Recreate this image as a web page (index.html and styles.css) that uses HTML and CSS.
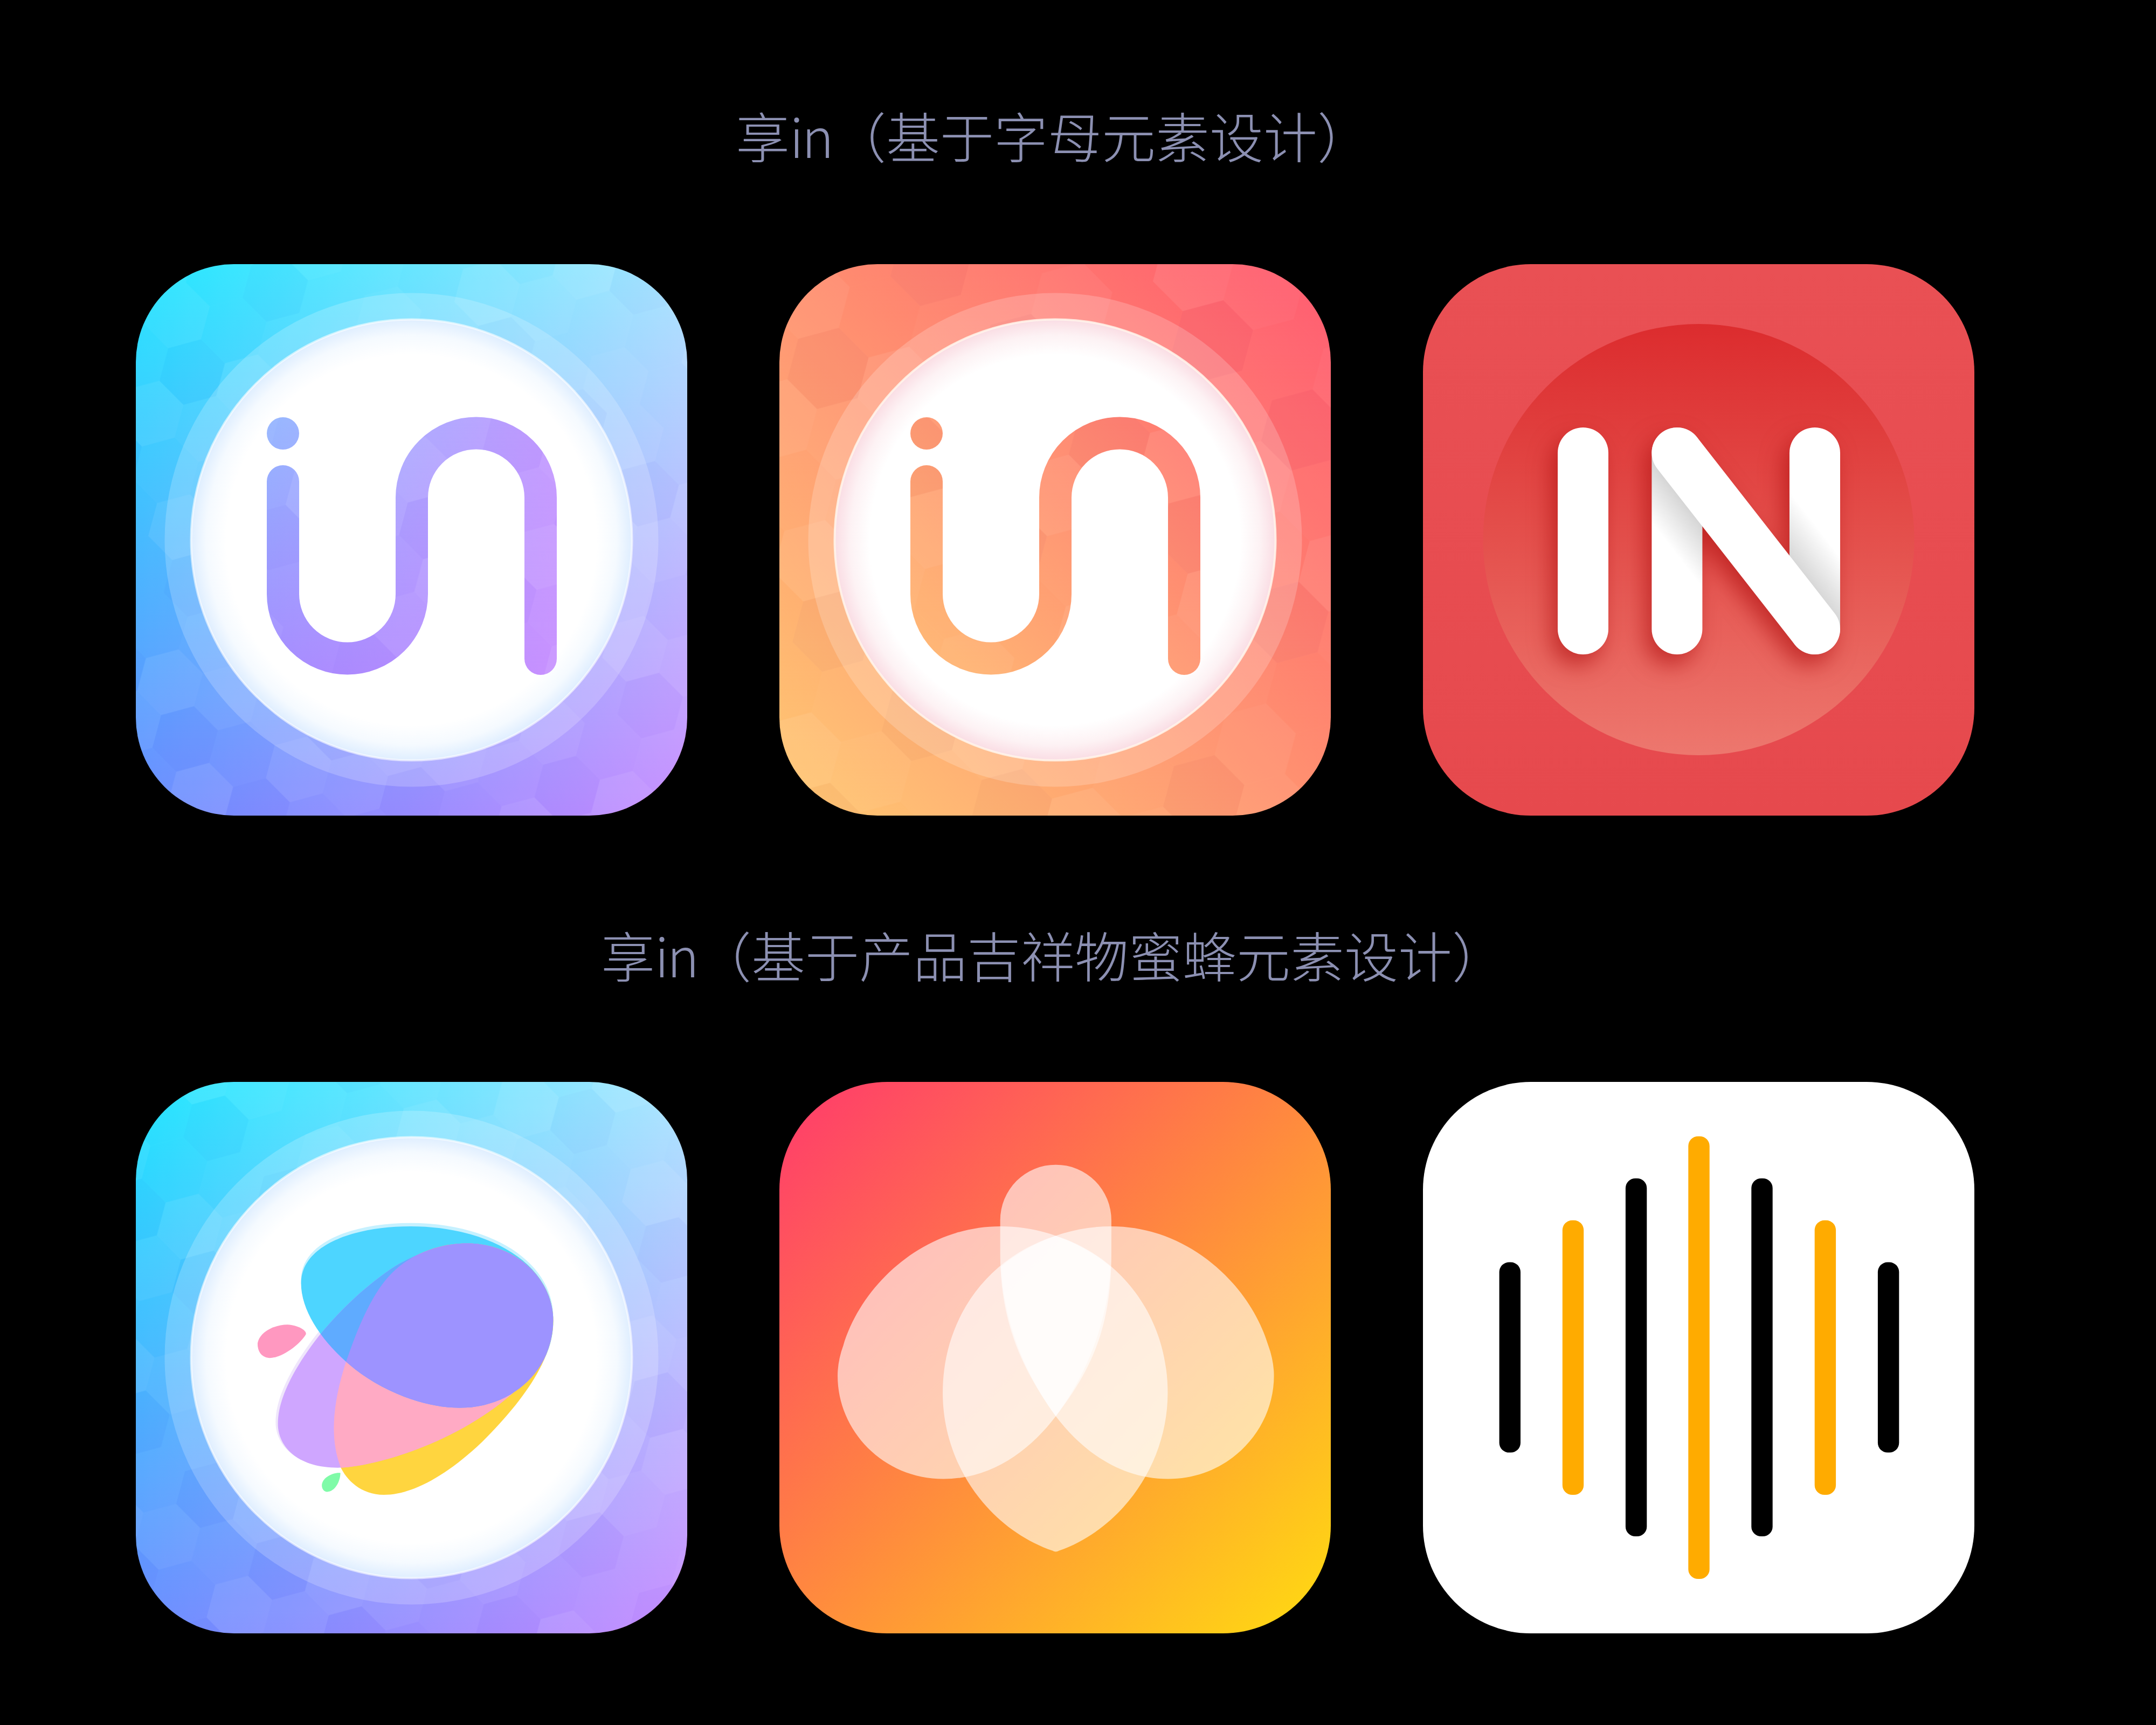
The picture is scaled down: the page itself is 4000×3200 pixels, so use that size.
FILE: index.html
```html
<!DOCTYPE html>
<html lang="zh">
<head>
<meta charset="utf-8">
<title>享in</title>
<link rel="stylesheet" href="styles.css">
</head>
<body>
<svg class="defs" width="0" height="0" aria-hidden="true">
  <defs>
    <path id="hx" d="M0-63 54.5-31.5V31.5L0 63-54.5 31.5V-31.5Z"/>
    <pattern id="hexA" width="436" height="566.4" patternUnits="userSpaceOnUse" patternTransform="translate(40 20) rotate(15)">
      <use href="#hx" x="54.5" y="63" class="ha"/><use href="#hx" x="163.5" y="63" class="hc"/><use href="#hx" x="272.5" y="63" class="hb"/><use href="#hx" x="381.5" y="63" class="hd"/>
      <use href="#hx" x="0" y="157.4" class="hb"/><use href="#hx" x="109" y="157.4" class="hd"/><use href="#hx" x="218" y="157.4" class="he"/><use href="#hx" x="327" y="157.4" class="ha"/><use href="#hx" x="436" y="157.4" class="hb"/>
      <use href="#hx" x="54.5" y="251.8" class="he"/><use href="#hx" x="163.5" y="251.8" class="ha"/><use href="#hx" x="272.5" y="251.8" class="hd"/><use href="#hx" x="381.5" y="251.8" class="hc"/>
      <use href="#hx" x="0" y="346.2" class="hd"/><use href="#hx" x="109" y="346.2" class="hb"/><use href="#hx" x="218" y="346.2" class="hc"/><use href="#hx" x="327" y="346.2" class="he"/><use href="#hx" x="436" y="346.2" class="hd"/>
      <use href="#hx" x="54.5" y="440.6" class="hc"/><use href="#hx" x="163.5" y="440.6" class="he"/><use href="#hx" x="272.5" y="440.6" class="ha"/><use href="#hx" x="381.5" y="440.6" class="hb"/>
      <use href="#hx" x="0" y="535" class="ha"/><use href="#hx" x="109" y="535" class="hc"/><use href="#hx" x="218" y="535" class="hd"/><use href="#hx" x="327" y="535" class="hb"/><use href="#hx" x="436" y="535" class="ha"/>
      <use href="#hx" x="0" y="-31.4" class="ha"/><use href="#hx" x="109" y="-31.4" class="hc"/><use href="#hx" x="218" y="-31.4" class="hd"/><use href="#hx" x="327" y="-31.4" class="hb"/><use href="#hx" x="436" y="-31.4" class="ha"/>
    </pattern>
    <pattern id="hexB" href="#hexA" patternTransform="translate(10 -30) rotate(15) scale(1.24)"/>
    <pattern id="hexC" href="#hexA" patternTransform="translate(-70 60) rotate(15)"/>
    <linearGradient id="cyanV" x1="0" y1="0" x2="0" y2="1"><stop offset="0" stop-color="#1fe6ff"/><stop offset="1" stop-color="#6a8cff"/></linearGradient>
    <linearGradient id="redH" x1="0" y1="0" x2="1" y2="0"><stop offset="0" stop-color="#000"/><stop offset="1" stop-color="#a00000"/></linearGradient>
    <linearGradient id="sunset" x1="1" y1="0" x2="0" y2="1"><stop offset="0" stop-color="#ff566c"/><stop offset="1" stop-color="#ffc870"/></linearGradient>
    <linearGradient id="inV" gradientUnits="userSpaceOnUse" x1="0" y1="285" x2="0" y2="762"><stop offset="0" stop-color="#94b6ff"/><stop offset="1" stop-color="#a48aff"/></linearGradient>
    <linearGradient id="inH" gradientUnits="userSpaceOnUse" x1="243" y1="0" x2="781" y2="0"><stop offset="0" stop-color="#d292ff" stop-opacity="0"/><stop offset="1" stop-color="#d292ff" stop-opacity=".75"/></linearGradient>
    <linearGradient id="inOrange" gradientUnits="userSpaceOnUse" x1="751" y1="285" x2="273" y2="762"><stop offset="0" stop-color="#ff786e"/><stop offset="1" stop-color="#ffb872"/></linearGradient>
    <radialGradient id="discBlue"><stop offset=".84" stop-color="#fff"/><stop offset=".93" stop-color="#f5faff"/><stop offset="1" stop-color="#dfeeff"/></radialGradient>
    <radialGradient id="discPink"><stop offset=".84" stop-color="#fff"/><stop offset=".93" stop-color="#fdf2f4"/><stop offset="1" stop-color="#fadde4"/></radialGradient>
    <mask id="inMask" maskUnits="userSpaceOnUse" x="0" y="0" width="1023" height="1023">
      <circle cx="273" cy="314" r="30" class="maskFill"/>
      <path d="M273 403V612A119.5 119.5 0 0 0 512 612V433A119.5 119.5 0 0 1 751 433V732" class="maskStroke"/>
    </mask>
    <linearGradient id="redBg" x1="0" y1="0" x2="0" y2="1"><stop offset="0" stop-color="#e95054"/><stop offset="1" stop-color="#e6494d"/></linearGradient>
    <linearGradient id="redDisc" x1="0" y1="0" x2="0" y2="1"><stop offset="0" stop-color="#dc2c2e"/><stop offset=".5" stop-color="#e4504c"/><stop offset="1" stop-color="#ed776e"/></linearGradient>
    <linearGradient id="foldL" gradientUnits="userSpaceOnUse" x1="434" y1="379" x2="379" y2="422"><stop offset="0" stop-color="#d6d6d6"/><stop offset="1" stop-color="#fff"/></linearGradient>
    <linearGradient id="foldR" gradientUnits="userSpaceOnUse" x1="764" y1="648" x2="821" y2="604"><stop offset="0" stop-color="#d8d8d8"/><stop offset="1" stop-color="#fff"/></linearGradient>
    <linearGradient id="flame" x1="0" y1="0" x2="1" y2="1"><stop offset="0" stop-color="#ff3a6c"/><stop offset=".5" stop-color="#ff8a3e"/><stop offset="1" stop-color="#ffdc10"/></linearGradient>
    <path id="blobB" d="M481 570C481 470 620 420 770 420 980 420 1148 520 1148 670 1148 800 1040 900 900 900 800 900 680 850 600 778 530 715 481 640 481 570Z"/>
    <path id="blobY" d="M600 778C640 660 680 580 730 535 780 490 850 465 920 465 1050 465 1148 560 1148 670 1148 770 1070 880 960 990 860 1085 770 1130 700 1130 640 1130 600 1090 585 1055 560 990 560 900 600 778Z"/>
    <path id="blobP" d="M532 705C590 635 660 570 730 525 790 490 860 465 920 465 1040 465 1148 560 1148 670 1140 740 1090 810 1040 862 900 985 700 1050 590 1058 480 1062 425 1010 420 950 415 870 480 770 532 705Z"/>
    <clipPath id="clipB"><use href="#blobB"/></clipPath>
    <clipPath id="clipP"><use href="#blobP"/></clipPath>
    <path id="wing" d="M912 527C870 490 815 462 767 445 720 428 670 420 620 420 420 420 255 570 205 735 195 762 190 790 190 815 190 960 310 1088 470 1088 600 1088 700 1010 767 922 850 810 905 670 912 527Z"/>
  </defs>
</svg>

<main class="page">
  <section class="group first">
    <h2 class="title">享<span class="latin">in</span>（基于字母元素设计）</h2>
    <div class="row">
      <div class="tile soft">
        <svg viewBox="0 0 1023 1023" class="art">
          <rect width="1023" height="1023" fill="url(#cyanV)"/>
          <rect width="1023" height="1023" fill="url(#redH)" class="screen"/>
          <rect width="1023" height="1023" fill="url(#hexA)"/>
          <circle cx="511.5" cy="511.5" r="458" class="ring"/>
          <circle cx="511.5" cy="511.5" r="409" fill="url(#discBlue)" class="disc"/>
          <g mask="url(#inMask)">
            <rect width="1023" height="1023" fill="url(#inV)"/>
            <rect width="1023" height="1023" fill="url(#inH)"/>
            <rect width="1023" height="1023" fill="url(#hexC)"/>
          </g>
        </svg>
      </div>
      <div class="tile soft">
        <svg viewBox="0 0 1023 1023" class="art">
          <rect width="1023" height="1023" fill="url(#sunset)"/>
          <rect width="1023" height="1023" fill="url(#hexB)"/>
          <circle cx="511.5" cy="511.5" r="458" class="ring"/>
          <circle cx="511.5" cy="511.5" r="409" fill="url(#discPink)" class="disc warm"/>
          <g mask="url(#inMask)">
            <rect width="1023" height="1023" fill="url(#inOrange)"/>
            <rect width="1023" height="1023" fill="url(#hexB)"/>
          </g>
        </svg>
      </div>
      <div class="tile">
        <svg viewBox="0 0 1023 1023" class="art">
          <rect width="1023" height="1023" fill="url(#redBg)"/>
          <circle cx="511.5" cy="511" r="400" fill="url(#redDisc)"/>
          <g class="liftShadow">
            <rect x="250" y="303" width="94" height="421" rx="47" class="white"/>
            <rect x="424.4" y="303" width="94" height="421" rx="47" fill="url(#foldL)"/>
            <rect x="680" y="303" width="94" height="421" rx="47" fill="url(#foldR)"/>
            <path d="M471.4 350 727 677" class="diag"/>
          </g>
        </svg>
      </div>
    </div>
  </section>

  <section class="group second">
    <h2 class="title">享<span class="latin">in</span>（基于产品吉祥物蜜蜂元素设计）</h2>
    <div class="row">
      <div class="tile soft">
        <svg viewBox="0 0 1023 1023" class="art">
          <rect width="1023" height="1023" fill="url(#cyanV)"/>
          <rect width="1023" height="1023" fill="url(#redH)" class="screen"/>
          <rect width="1023" height="1023" fill="url(#hexC)"/>
          <circle cx="511.5" cy="511.5" r="458" class="ring"/>
          <circle cx="511.5" cy="511.5" r="409" fill="url(#discBlue)" class="disc"/>
          <g transform="scale(.7015) translate(-44 -38)">
            <use href="#blobB" y="-9" class="bHalo"/>
            <use href="#blobP" x="-6" y="-4" class="pHalo"/>
            <use href="#blobB" class="bBlue"/>
            <use href="#blobY" class="bYellow"/>
            <use href="#blobP" class="bPurple"/>
            <use href="#blobY" clip-path="url(#clipP)" class="bPink"/>
            <use href="#blobP" clip-path="url(#clipB)" class="bSky"/>
            <use href="#blobY" clip-path="url(#clipB)" class="bViolet"/>
            <path d="M366 730C370 700 410 680 445 680 475 682 495 695 494 705 480 730 430 770 395 768 375 765 366 750 366 730Z" class="dropPink"/>
            <path d="M536 1105C536 1085 565 1070 585 1072 585 1095 570 1122 550 1122 542 1122 536 1115 536 1105Z" class="dropGreen"/>
          </g>
        </svg>
      </div>
      <div class="tile">
        <svg viewBox="0 0 1023 1023" class="art">
          <rect width="1023" height="1023" fill="url(#flame)"/>
          <g transform="scale(.7015) translate(-36 -38)" class="petals">
            <use href="#wing"/>
            <use href="#wing" transform="translate(1534 0) scale(-1 1)"/>
            <path d="M620 404A147 147 0 0 1 914 404V490C914 690 860 800 767 922 680 800 620 680 620 490Z"/>
            <path d="M767 445C940 500 1063 660 1063 860 1063 1050 940 1220 775 1278 770 1281 764 1281 759 1278 590 1220 468 1050 468 860 468 660 590 500 767 445Z"/>
          </g>
        </svg>
      </div>
      <div class="tile">
        <svg viewBox="0 0 1023 1023" class="art">
          <rect width="1023" height="1023" class="white"/>
          <rect x="141.6" y="334.6" width="39.4" height="353" rx="18" class="black"/>
          <rect x="258.8" y="256.8" width="39.4" height="509.2" rx="18" class="amber"/>
          <rect x="375.9" y="179" width="39.4" height="664" rx="18" class="black"/>
          <rect x="492.3" y="101" width="39.4" height="821" rx="18" class="amber"/>
          <rect x="609.3" y="179" width="39.4" height="664" rx="18" class="black"/>
          <rect x="726.7" y="256.8" width="39.4" height="509.2" rx="18" class="amber"/>
          <rect x="843.9" y="334.6" width="39.4" height="353" rx="18" class="black"/>
        </svg>
      </div>
    </div>
  </section>
</main>
</body>
</html>
```
FILE: styles.css
```css
html, body {
  margin: 0;
  background: #000;
}
body {
  width: 4000px;
  height: 3200px;
  overflow: hidden;
}
.defs {
  display: block;
  height: 0;
  width: 0;
}
.page {
  width: 3411px;
  margin-left: 252px;
  display: flex;
  flex-direction: column;
}
.group {
  display: flex;
  flex-direction: column;
}
.first { padding-top: 180px; }
.second { padding-top: 187px; }
.title {
  margin: 0 0 170px;
  padding-right: 6px;
  height: 140px;
  line-height: 140px;
  text-align: center;
  font-family: "Noto Sans CJK SC", "Noto Sans", sans-serif;
  font-size: 100px;
  font-weight: 300;
  color: #8c90b2;
  white-space: nowrap;
}
.latin { letter-spacing: -3px; }
.second .title { margin-bottom: 167px; }
.row {
  display: grid;
  grid-template-columns: repeat(3, 1023px);
  column-gap: 171px;
}
.tile {
  width: 1023px;
  height: 1023px;
  border-radius: 200px;
  overflow: hidden;
  isolation: isolate;
}
.tile.soft { border-radius: 182px; }
.art {
  display: block;
  width: 1023px;
  height: 1023px;
}
.screen { mix-blend-mode: screen; }
.ha { fill: rgba(255, 255, 255, .06); }
.hb { fill: rgba(255, 255, 255, .03); }
.hc { fill: rgba(255, 255, 255, .012); }
.hd { fill: rgba(90, 60, 200, .025); }
.he { fill: rgba(255, 255, 255, .085); }
.ring { fill: rgba(255, 255, 255, .2); }
.disc {
  stroke: rgba(255, 255, 255, .6);
  stroke-width: 4px;
}
.disc.warm { stroke: rgba(255, 246, 236, .85); }
.maskFill { fill: #fff; }
.maskStroke {
  fill: none;
  stroke: #fff;
  stroke-width: 60px;
  stroke-linecap: round;
}
.white { fill: #fff; }
.black { fill: #000; }
.amber { fill: #ffab00; }
.diag {
  fill: none;
  stroke: #fff;
  stroke-width: 94px;
  stroke-linecap: round;
}
.liftShadow { filter: drop-shadow(-12px 20px 20px rgba(175, 15, 15, .62)); }
.bHalo { fill: #c6f1ff; }
.pHalo { fill: #efe6fb; }
.bBlue { fill: #4dd5ff; }
.bYellow { fill: #ffd53f; }
.bPurple { fill: #cfa6ff; }
.bPink { fill: #ffaac4; }
.bSky { fill: #5fabff; }
.bViolet { fill: #9d93ff; }
.dropPink { fill: #ff98c0; }
.dropGreen { fill: #7ffba8; }
.petals { fill: rgba(255, 255, 255, .6); }
```
